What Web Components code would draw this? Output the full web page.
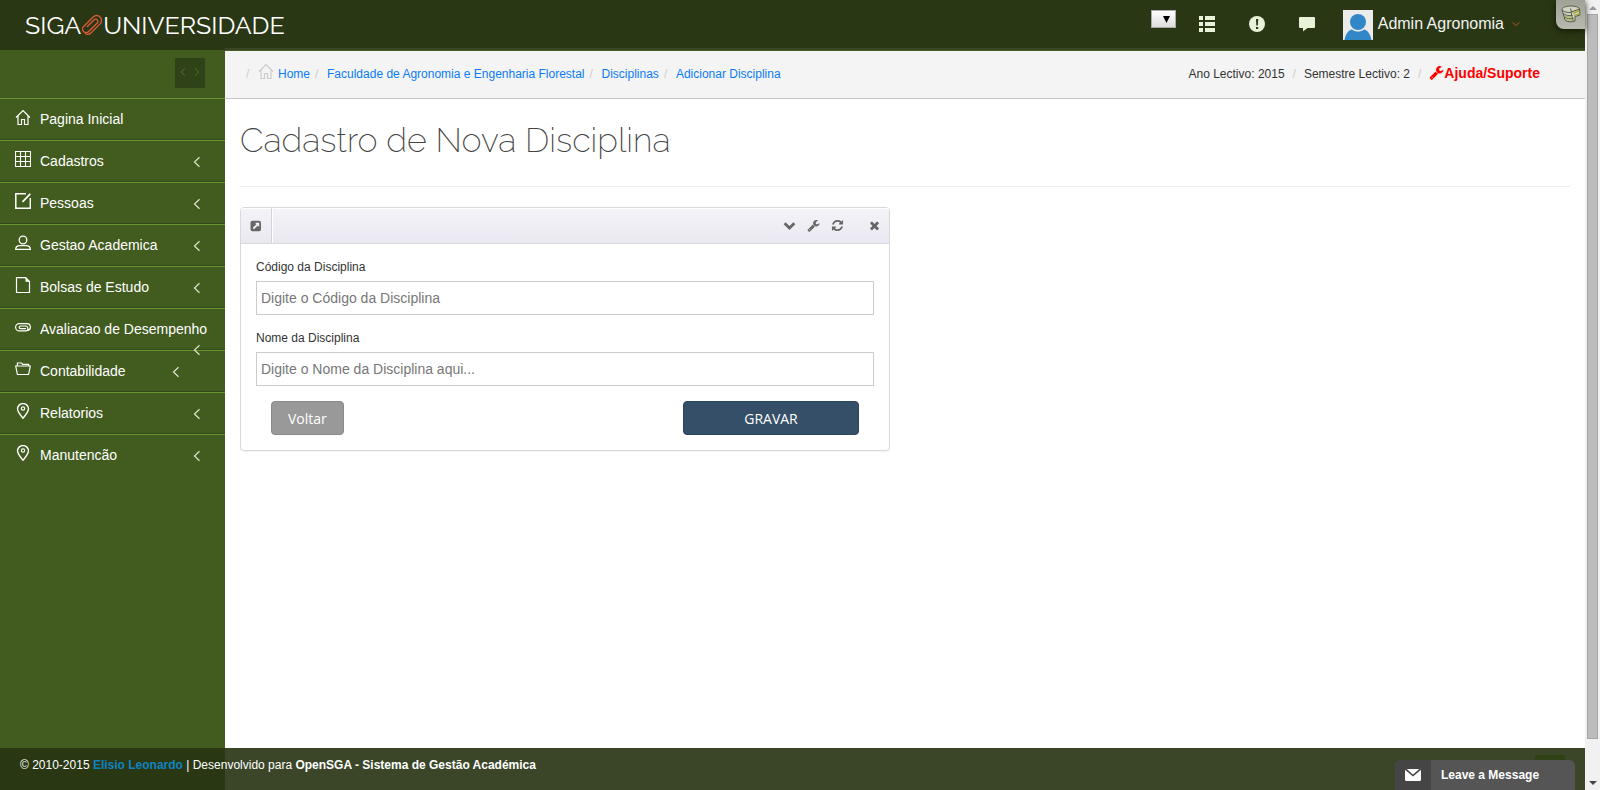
<!DOCTYPE html>
<html lang="pt">
<head>
<meta charset="utf-8">
<title>SIGA Universidade</title>
<style>
html, body { margin: 0; height: 100%; }
body { font: 12px/20px "Liberation Sans", Arial, sans-serif; color: #333; background: #425b1f; }
</style>
</head>
<body>
<siga-app></siga-app>

<script>
const ICONS = {
  home: ['0 0 16 16', '<path d="M1 8.5 8 1.5l7 7M3 7v8.5h3.5v-5h3v5H13V7" fill="none" stroke="currentColor" stroke-width="1.2"/>'],
  grid: ['0 0 16 16', '<path d="M.5.5h15v15H.5zM5.5.5v15M10.5.5v15M.5 5.5h15M.5 10.5h15" fill="none" stroke="currentColor" stroke-width="1.1"/>'],
  edit: ['0 0 16 16', '<path d="M11 .8H.8v14.5h14.5V5" fill="none" stroke="currentColor" stroke-width="1.5"/><path d="M7.5 8.8 15.3.8" stroke="currentColor" stroke-width="1.7"/>'],
  user: ['0 0 16 16', '<circle cx="8" cy="5" r="3.8" fill="none" stroke="currentColor" stroke-width="1.3"/><path d="M.7 14.4c0-2.8 2-3.8 4.2-3.8h6.2c2.2 0 4.2 1 4.2 3.8z" fill="none" stroke="currentColor" stroke-width="1.3"/>'],
  file: ['0 0 16 16', '<path d="M1.5.6h9.2l3.8 4v10.900h-13z" fill="none" stroke="currentColor" stroke-width="1.2"/><path d="M10.5.5v4.2h4.200z" fill="currentColor"/>'],
  clip: ['0 0 16 16', '<path d="M13 11.300c1.500-.3 2.400-1.500 2.400-3C15.400 6 13.800 4.600 12 4.600H4.200C2.300 4.600.6 6.200.6 8.200s1.700 3.700 3.600 3.700H11c1.200 0 1.900-.8 1.900-1.900S12.200 7 11 7H5.500a1.200 1.200 0 0 0 0 2.600H11" fill="none" stroke="currentColor" stroke-width="1.2"/>'],
  folder: ['0 0 16 16', '<path d="M.7 5h14.600l-1.700 8.500H2.400zM2.400 5V2h4.200l1 1.300h6V5" fill="none" stroke="currentColor" stroke-width="1.2"/>'],
  pin: ['0 0 16 16', '<path d="M8 15.200C4 10.600 2.500 8.300 2.500 5.800a5.500 5.200 0 0 1 11 0C13.500 8.300 12 10.600 8 15.200z" fill="none" stroke="currentColor" stroke-width="1.4"/><circle cx="8" cy="5.500" r="1.700" fill="none" stroke="currentColor" stroke-width="1.2"/>'],
  left: ['0 0 8 12', '<path d="M6.500 1.200 1.500 6l5 4.800" fill="none" stroke="currentColor" stroke-width="1.2"/>'],
  right: ['0 0 8 12', '<path d="m1.500 1.200 5 4.800-5 4.800" fill="none" stroke="currentColor" stroke-width="1.2"/>'],
  down: ['0 0 8 8', '<path d="m.7 2.300 3.300 3.400 3.300-3.400" fill="none" stroke="currentColor"/>'],
  logoclip: ['0 0 22 22', '<g transform="translate(11 11) rotate(-45)" fill="none" stroke="currentColor" stroke-width="1.3"><path d="M-6 4.900H6.500A4.900 4.900 0 0 0 6.500-4.900H-7A3.600 3.600 0 0 0-7 2.300H5.500A2.300 2.300 0 0 0 5.500-2.200H-5M-6 4.900A4.900 4.900 0 0 1-10.900.8"/></g>'],
  list: ['0 0 16 16', '<path d="M0 0h4v4H0zM6 0h10v4H6zM0 6h4v4H0zM6 6h10v4H6zM0 12h4v4H0zM6 12h10v4H6z" fill="currentColor"/>'],
  alert: ['0 0 16 16', '<circle cx="8" cy="8" r="8" fill="currentColor"/><path d="M7 3h2.200l-.3 6.500H7.300zM7 11h2.200v2H7z" fill="#2a3714"/>'],
  comment: ['0 0 16 16', '<path d="M1 1h14a1 1 0 0 1 1 1v9a1 1 0 0 1-1 1H8.500L4 15.500V12H1a1 1 0 0 1-1-1V2a1 1 0 0 1 1-1z" fill="currentColor"/>'],
  avatar: ['0 0 30 30', '<path d="M0 0h30v30H0z" fill="#ebebeb"/><circle cx="15" cy="12" r="8" fill="#3287c9"/><path d="M1.500 30C2.500 23.500 6 20 9 19.500c3.500 2.700 8.500 2.700 12 0 3 .5 6.500 4 7.500 10.500z" fill="#3287c9"/>'],
  db: ['0 0 20 18', '<path d="M1 4.500C1 2.500 5 1 9.500 1S18 2 18.500 4l.5 6-5 1.500L14 16c-3 1.500-8 1-10-1z" fill="#d0d2c4" stroke="#555a45"/><path d="M1 5c3 2.500 7 3 9.500 2L18.500 4M2 8.500c3 2 6 2.500 9.500 2M3 12c3 1.800 6 2 9.500 1.500M10 7l2 9M10.500 6.800 9.500 3.500" fill="none" stroke="#555a45"/><path d="m12 7.300 6-2.300.3 1.600-5.800 2.300zM12.600 10l6-2v1.500l-5.500 1.700z" fill="#a4ac35"/><path d="M3 10.700c3 1.200 5 1.500 8 1M4 14.500c3 1 6 1 9 0" fill="none" stroke="#a4ac55"/>'],
  wrench: ['0 0 1792 1792', '<path fill="currentColor" d="M448 1472q0-26-19-45t-45-19-45 19-19 45 19 45 45 19 45-19 19-45zm644-420l-682 682q-37 37-90 37-52 0-91-37l-106-108q-38-36-38-90 0-53 38-91l681-681q39 98 114.500 173.500t173.500 114.500zm634-435q0 39-23 106-47 134-164.500 217.500t-258.500 83.500q-185 0-316.500-131.500t-131.500-316.500 131.500-316.500 316.500-131.500q58 0 121.500 16.500t107.500 46.500q16 11 16 28t-16 28l-293 169v224l193 107q5-3 79-48.500t135.500-81 70.500-35.500q15 0 23.500 10t8.500 25z"/>'],
  refresh: ['0 0 1792 1792', '<path fill="currentColor" d="M1639 1056q0 5-1 7-64 268-268 434.500t-478 166.500q-146 0-282.500-55t-243.500-157l-129 129q-19 19-45 19t-45-19-19-45v-448q0-26 19-45t45-19h448q26 0 45 19t19 45-19 45l-137 137q71 66 161 102t187 36q134 0 250-65t186-179q11-17 53-117 8-23 30-23h192q13 0 22.500 9.500t9.500 22.500zm25-800v448q0 26-19 45t-45 19h-448q-26 0-45-19t-19-45 19-45l138-138q-148-137-349-137-134 0-250 65t-186 179q-11 17-53 117-8 23-30 23h-199q-13 0-22.500-9.500t-9.500-22.500v-7q65-268 270-434.500t480-166.500q146 0 284 55.500t245 156.500l130-129q19-19 45-19t45 19 19 45z"/>'],
  times: ['0 0 1792 1792', '<path fill="currentColor" d="M1490 1322q0 40-28 68l-136 136q-28 28-68 28t-68-28l-294-294-294 294q-28 28-68 28t-68-28l-136-136q-28-28-28-68t28-68l294-294-294-294q-28-28-28-68t28-68l136-136q28-28 68-28t68 28l294 294 294-294q28-28 68-28t68 28l136 136q28 28 28 68t-28 68l-294 294 294 294q28 28 28 68z"/>'],
  chevron: ['0 0 12 12', '<path d="M1.500 4 6 8.300 10.500 4" fill="none" stroke="currentColor" stroke-width="2.600"/>'],
  external: ['0 0 12 12', '<rect x=".5" y=".8" width="10.500" height="10.500" rx="2" fill="currentColor"/><path d="M5 2.800h4.200V7L7.800 5.600 4 9.300 2.700 8l3.700-3.800z" fill="#f4f3f8"/>'],
  mail: ['0 0 16 12', '<rect width="16" height="12" rx="1.500" fill="currentColor"/><path d="m.5 0 7.500 6.500L15.500 0" fill="none" stroke="#454545" stroke-width="1.600"/>'],
  up: ['0 0 8 4', '<path d="m0 4 4-4 4 4z" fill="currentColor"/>'],
  tri: ['0 0 8 4', '<path d="m0 0 4 4 4-4z" fill="currentColor"/>']
};

function define(name, css, html) {
  customElements.define(name, class extends HTMLElement {
    constructor() {
      super();
      this.attachShadow({ mode: 'open' });
    }
    connectedCallback() {
      const body = typeof html === 'function' ? html(this) : html;
      this.shadowRoot.innerHTML = `<style>*{box-sizing:border-box}a{color:inherit;text-decoration:none}button{padding:0;border:0;background:none;color:inherit;font:inherit}${css}</style>${body}`;
    }
  });
}

define('siga-icon', `:host{display:inline-block;flex:none;width:16px;height:16px}svg{display:block;width:100%;height:100%}`, el => {
  const [box, shape] = ICONS[el.getAttribute('name')];
  return `<svg viewBox="${box}" aria-hidden="true">${shape}</svg>`;
});

define('siga-header', `
  :host{display:flex;align-items:flex-start;flex:none;height:50px;padding-left:25px;color:#fff;
    background:linear-gradient(#3b4628,#3b4628) 225px 48px/100% 2px no-repeat #2a3714}
  .logo{display:flex;align-items:center;height:50px;font:400 25px/50px Raleway,Lato,sans-serif}
  .logo siga-icon{width:22px;height:22px;color:#dd5a38}
  .tools{display:flex;align-items:flex-start;margin-left:auto}
  select{width:25px;height:18px;margin:10px 23px 0 0;padding:0;border:1px solid #aaa;border-radius:0;appearance:none;
    background:url('data:image/svg+xml,<svg xmlns="http://www.w3.org/2000/svg" width="7" height="7"><path d="M0 0h7L3.500 7z"/></svg>') 11px 5px no-repeat,linear-gradient(#fff,#ddd)}
  .tool{width:16px;height:16px;margin:16px 34px 0 0;line-height:0;color:#e8f2d8}
  .tool:nth-of-type(3){margin-right:28px}
  .user{display:flex;align-items:flex-start;gap:5px;height:30px;margin-top:10px;font-size:16px;line-height:27px;color:#f2f2f2}
  .user siga-icon:first-child{width:30px;height:30px}
  .user siga-icon:last-child{width:8px;height:8px;margin:10px 0 0 3px;color:#c0522d}
  .db{display:flex;align-items:center;justify-content:center;width:29px;height:29px;margin-left:36px;padding-bottom:2px;border-radius:0 0 0 8px;background:linear-gradient(#a0a298,#b8bab0);box-shadow:0 2px 6px #111a05}
  .db siga-icon{width:20px;height:18px}
`, `
  <a class="logo" href="#"><span>SIGA</span><siga-icon name="logoclip"></siga-icon><span>UNIVERSIDADE</span></a>
  <div class="tools">
    <select aria-label="Perfil"></select>
    <button class="tool" aria-label="Tarefas"><siga-icon name="list"></siga-icon></button>
    <button class="tool" aria-label="Alertas"><siga-icon name="alert"></siga-icon></button>
    <button class="tool" aria-label="Mensagens"><siga-icon name="comment"></siga-icon></button>
    <a class="user" href="#"><siga-icon name="avatar"></siga-icon><span>Admin Agronomia</span><siga-icon name="down"></siga-icon></a>
    <button class="db" aria-label="Base de dados"><siga-icon name="db"></siga-icon></button>
  </div>
`);

/* The arrow floats, so a long label pushes it below its own row. */
define('siga-nav-item', `
  :host{display:block}
  a{display:block;height:42px;padding:10px 15px;border-top:1px solid #6a9530;border-bottom:1px solid #33491a;font-size:14px;line-height:20px;white-space:nowrap}
  :host(:last-child) a{border-bottom-color:transparent}
  .icon{float:left;margin:0 9px 0 0}
  .arrow{float:right;width:21px;height:24px;padding:5px 9px 7px 4px;color:#dbe3cf}
  .arrow siga-icon{display:block;width:8px;height:12px}
`, el => `<a href="#"><siga-icon class="icon" name="${el.getAttribute('icon')}"></siga-icon><slot></slot>${el.hasAttribute('leaf') ? '' : '<span class="arrow"><siga-icon name="left"></siga-icon></span>'}</a>`);

define('siga-sidebar', `
  :host{display:block;flex:none;width:225px;background:#425b1f;color:#fff}
  .top{display:flex;justify-content:flex-end;height:48px;padding:8px 20px 0}
  .top button{display:flex;align-items:center;justify-content:space-between;width:30px;height:30px;padding:0 5px 2px;background:#304217;color:#527a22}
  .top siga-icon{width:6px;height:10px}
`, `
  <div class="top"><button aria-label="Recolher menu"><siga-icon name="left"></siga-icon><siga-icon name="right"></siga-icon></button></div>
  <nav>
    <siga-nav-item icon="home" leaf>Pagina Inicial</siga-nav-item>
    <siga-nav-item icon="grid">Cadastros</siga-nav-item>
    <siga-nav-item icon="edit">Pessoas</siga-nav-item>
    <siga-nav-item icon="user">Gestao Academica</siga-nav-item>
    <siga-nav-item icon="file">Bolsas de Estudo</siga-nav-item>
    <siga-nav-item icon="clip">Avaliacao de Desempenho</siga-nav-item>
    <siga-nav-item icon="folder">Contabilidade</siga-nav-item>
    <siga-nav-item icon="pin">Relatorios</siga-nav-item>
    <siga-nav-item icon="pin">Manutencão</siga-nav-item>
  </nav>
`);

define('siga-crumbs', `
  :host{display:flex;justify-content:space-between;height:48px;margin-top:1px;padding:0 45px 0 20px;background:#f4f4f4;border-bottom:1px solid #c6c6cb;line-height:46px;white-space:nowrap}
  nav,div{display:flex}
  i{font-style:normal;color:#ccc}
  nav{color:#0a7cf5}
  nav i{width:13px;padding-left:1px}
  nav a{display:flex;margin-right:4px}
  nav siga-icon{width:16px;height:16px;margin:12px 4px 0 0;color:#ccc}
  div i{margin:0 8px}
  .help{display:flex;font-size:14px;line-height:44px;font-weight:bold;color:#f00}
  .help siga-icon{width:15px;height:15px;margin-top:14px}
`, `
  <nav aria-label="Caminho"><i>/</i>
    <a href="#"><siga-icon name="home"></siga-icon>Home</a><i>/</i>
    <a href="#">Faculdade de Agronomia e Engenharia Florestal</a><i>/</i>
    <a href="#">Disciplinas</a><i>/</i>
    <a href="#">Adicionar Disciplina</a></nav>
  <div><span>Ano Lectivo: 2015</span><i>/</i><span>Semestre Lectivo: 2</span><i>/</i><a class="help" href="#"><siga-icon name="wrench"></siga-icon>Ajuda/Suporte</a></div>
`);

define('siga-field', `
  :host{display:block;margin-bottom:15px}
  label{display:block;height:22px;line-height:16px}
  input{display:block;width:100%;height:34px;padding:0 4px;border:1px solid #ccc;border-radius:0;background:#fff;font:14px "Liberation Sans",Arial,sans-serif;color:#333}
  input::placeholder{color:#777}
`, el => `<label for="f">${el.getAttribute('label')}</label><input id="f" type="text" placeholder="${el.getAttribute('hint')}">`);

define('siga-panel', `
  :host{display:block;width:calc(50% - 15px);border:1px solid #d9d9d9;border-radius:4px;background:#fff;box-shadow:0 1px 1px #0000000d}
  header{display:flex;align-items:center;height:36px;padding-right:8px;border-bottom:1px solid #d9d9dc;border-radius:3px 3px 0 0;background:linear-gradient(#f4f3f8,#eae9f2);box-shadow:inset 0 1px #fff;color:#666}
  .open{display:flex;align-items:center;justify-content:center;width:31px;height:35px;border-right:1px solid #d4d4d8;box-shadow:1px 0 #fff}
  siga-icon{display:block;width:13px;height:13px}
  .open siga-icon{width:12px;height:12px}
  .acts{display:flex;gap:11px;margin-left:auto}
  .acts button{width:13px;height:13px}
  .acts button:last-child{margin-left:13px}
  .body{padding:15px}
`, `
  <header><button class="open" aria-label="Abrir"><siga-icon name="external"></siga-icon></button>
    <div class="acts">
      <button aria-label="Minimizar"><siga-icon name="chevron"></siga-icon></button>
      <button aria-label="Configurar"><siga-icon name="wrench"></siga-icon></button>
      <button aria-label="Actualizar"><siga-icon name="refresh"></siga-icon></button>
      <button aria-label="Fechar"><siga-icon name="times"></siga-icon></button>
    </div></header>
  <div class="body"><slot></slot></div>
`);

define('siga-button', `
  :host{display:block}
  button{height:34px;padding:0 16px;border:1px solid #8a8a8a;border-radius:4px;background:#999;color:#fff;font:14px "Open Sans",sans-serif}
  :host([primary]) button{width:176px;border-color:#2c435c;background:#364f69}
`, `<button><slot></slot></button>`);

define('siga-page', `
  :host{display:block;flex:1;min-width:0;background:#fff}
  .band{display:flow-root;background:#425b1f}
  main{padding:20px 15px 60px}
  h1{height:68px;margin:0 0 20px;border-bottom:1px solid #eee;font:200 34px/42px Raleway,Lato,sans-serif;color:#444}
  .row{display:flex;justify-content:space-between;padding:0 15px}
`, `
  <div class="band"><siga-crumbs></siga-crumbs></div>
  <main>
    <h1>Cadastro de Nova Disciplina</h1>
    <siga-panel>
      <siga-field label="Código da Disciplina" hint="Digite o Código da Disciplina"></siga-field>
      <siga-field label="Nome da Disciplina" hint="Digite o Nome da Disciplina aqui..."></siga-field>
      <div class="row"><siga-button>Voltar</siga-button><siga-button primary>GRAVAR</siga-button></div>
    </siga-panel>
  </main>
`);

define('siga-footer', `
  :host{display:flex;justify-content:space-between;position:absolute;left:0;right:0;bottom:0;height:42px;padding:0 10px 0 20px;background:rgba(40,52,19,.91);color:#fff;line-height:34px}
  p{margin:0}
  p a{font-weight:bold;color:#0d83c4}
  .chat{display:flex;align-self:flex-end;width:180px;height:30px;border-radius:6px 6px 0 0;overflow:hidden;background:#555;font-weight:bold;line-height:30px;text-align:left}
  .chat span:first-child{display:flex;align-items:center;justify-content:center;width:36px;height:30px;margin-right:10px;background:#454545}
  .chat siga-icon{width:16px;height:12px}
  .end{position:relative;display:flex}
  .top{position:absolute;right:10px;top:7px;width:30px;height:5px;background:#2f4216}
`, `
  <p>© 2010-2015 <a href="#">Elisio Leonardo</a> | Desenvolvido para <strong>OpenSGA - Sistema de Gestão Académica</strong></p>
  <div class="end"><button class="top" aria-label="Topo"></button><button class="chat"><span><siga-icon name="mail"></siga-icon></span><span>Leave a Message</span></button></div>
`);

define('siga-scrollbar', `
  :host{display:flex;flex-direction:column;align-items:center;flex:none;width:15px;padding:6px 0 5px;background:#f1f1f1;color:#999}
  siga-icon{width:8px;height:4px}
  .thumb{width:11px;margin:4px 0 0;flex:1;border:1px solid #a6a6a6;background:#bcbcbc}
  siga-icon:last-child{margin-top:42px;color:#444}
`, `<siga-icon name="up"></siga-icon><div class="thumb"></div><siga-icon name="tri"></siga-icon>`);

define('siga-app', `
  :host{display:flex;min-height:100vh}
  .view{position:relative;display:flex;flex-direction:column;flex:1;min-width:0}
  .cols{display:flex;flex:1}
`, `
  <div class="view">
    <siga-header></siga-header>
    <div class="cols"><siga-sidebar></siga-sidebar><siga-page></siga-page></div>
    <siga-footer></siga-footer>
  </div>
  <siga-scrollbar></siga-scrollbar>
`);
</script>
</body>
</html>
